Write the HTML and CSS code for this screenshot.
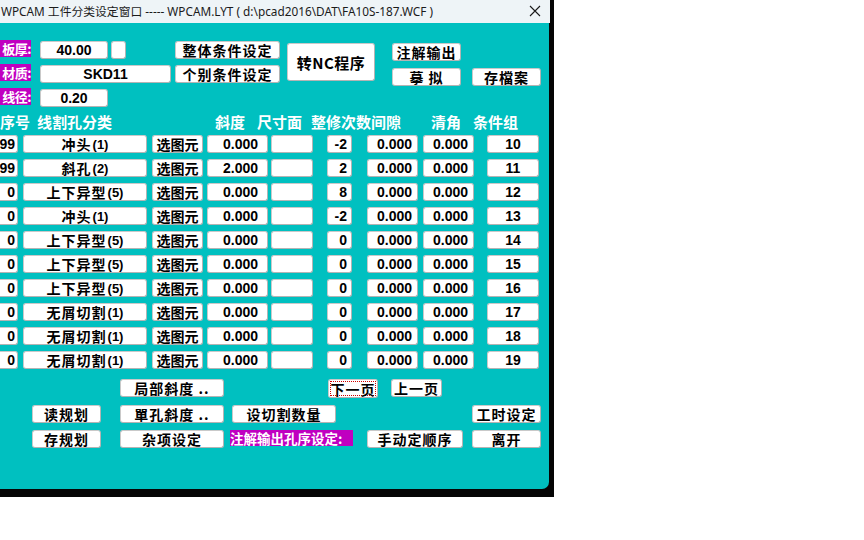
FILE: index.html
```html
<!DOCTYPE html>
<html lang="zh">
<head>
<meta charset="utf-8">
<title>WPCAM 工件分类设定窗口</title>
<link rel="stylesheet" href="styles.css">
</head>
<body>
<div class="window">
  <div class="titlebar">
    <span class="title">WPCAM 工件分类设定窗口 ----- WPCAM.LYT ( d:\pcad2016\DAT\FA10S-187.WCF )</span>
    <svg class="close" width="12" height="12" viewBox="0 0 12 12"><path d="M1 1 L11 11 M11 1 L1 11" stroke="#1a1a1a" stroke-width="1.1" fill="none"/></svg>
  </div>
  <div class="client">
    <div class="top">
      <div class="params">
        <div class="prow">
          <span class="tag">板厚:</span>
          <span class="fld num w68">40.00</span>
          <span class="fld box"></span>
          <span class="btn cond">整体条件设定</span>
        </div>
        <div class="prow">
          <span class="tag">材质:</span>
          <span class="fld num w131">SKD11</span>
          <span class="btn cond2">个别条件设定</span>
        </div>
        <div class="prow">
          <span class="tag">线径:</span>
          <span class="fld num w68">0.20</span>
        </div>
      </div>
      <div class="btn nc">转NC程序</div>
      <div class="actions">
        <div class="btn act">注解输出</div>
        <div class="arow">
          <div class="btn act">摹 拟</div>
          <div class="btn act save">存檔案</div>
        </div>
      </div>
    </div>

    <div class="thead">
      <span class="h-no">序号</span>
      <span class="h-cls">线割孔分类</span>
      <span class="h-slope">斜度</span>
      <span class="h-size">尺寸面</span>
      <span class="h-rep">整修次数间隙</span>
      <span class="h-corner">清角</span>
      <span class="h-grp">条件组</span>
    </div>

    <div class="table">
      <div class="trow"><span class="fld num c-no">99</span><span class="btn c-cls">冲头<span class="par">(1)</span></span><span class="btn c-pick">选图元</span><span class="fld num c-slope">0.000</span><span class="fld c-size"></span><span class="fld num c-rep">-2</span><span class="fld num c-gap">0.000</span><span class="fld num c-corner">0.000</span><span class="fld num c-grp">10</span></div>
      <div class="trow"><span class="fld num c-no">99</span><span class="btn c-cls">斜孔<span class="par">(2)</span></span><span class="btn c-pick">选图元</span><span class="fld num c-slope">2.000</span><span class="fld c-size"></span><span class="fld num c-rep">2</span><span class="fld num c-gap">0.000</span><span class="fld num c-corner">0.000</span><span class="fld num c-grp">11</span></div>
      <div class="trow"><span class="fld num c-no">0</span><span class="btn c-cls">上下异型<span class="par">(5)</span></span><span class="btn c-pick">选图元</span><span class="fld num c-slope">0.000</span><span class="fld c-size"></span><span class="fld num c-rep">8</span><span class="fld num c-gap">0.000</span><span class="fld num c-corner">0.000</span><span class="fld num c-grp">12</span></div>
      <div class="trow"><span class="fld num c-no">0</span><span class="btn c-cls">冲头<span class="par">(1)</span></span><span class="btn c-pick">选图元</span><span class="fld num c-slope">0.000</span><span class="fld c-size"></span><span class="fld num c-rep">-2</span><span class="fld num c-gap">0.000</span><span class="fld num c-corner">0.000</span><span class="fld num c-grp">13</span></div>
      <div class="trow"><span class="fld num c-no">0</span><span class="btn c-cls">上下异型<span class="par">(5)</span></span><span class="btn c-pick">选图元</span><span class="fld num c-slope">0.000</span><span class="fld c-size"></span><span class="fld num c-rep">0</span><span class="fld num c-gap">0.000</span><span class="fld num c-corner">0.000</span><span class="fld num c-grp">14</span></div>
      <div class="trow"><span class="fld num c-no">0</span><span class="btn c-cls">上下异型<span class="par">(5)</span></span><span class="btn c-pick">选图元</span><span class="fld num c-slope">0.000</span><span class="fld c-size"></span><span class="fld num c-rep">0</span><span class="fld num c-gap">0.000</span><span class="fld num c-corner">0.000</span><span class="fld num c-grp">15</span></div>
      <div class="trow"><span class="fld num c-no">0</span><span class="btn c-cls">上下异型<span class="par">(5)</span></span><span class="btn c-pick">选图元</span><span class="fld num c-slope">0.000</span><span class="fld c-size"></span><span class="fld num c-rep">0</span><span class="fld num c-gap">0.000</span><span class="fld num c-corner">0.000</span><span class="fld num c-grp">16</span></div>
      <div class="trow"><span class="fld num c-no">0</span><span class="btn c-cls">无屑切割<span class="par">(1)</span></span><span class="btn c-pick">选图元</span><span class="fld num c-slope">0.000</span><span class="fld c-size"></span><span class="fld num c-rep">0</span><span class="fld num c-gap">0.000</span><span class="fld num c-corner">0.000</span><span class="fld num c-grp">17</span></div>
      <div class="trow"><span class="fld num c-no">0</span><span class="btn c-cls">无屑切割<span class="par">(1)</span></span><span class="btn c-pick">选图元</span><span class="fld num c-slope">0.000</span><span class="fld c-size"></span><span class="fld num c-rep">0</span><span class="fld num c-gap">0.000</span><span class="fld num c-corner">0.000</span><span class="fld num c-grp">18</span></div>
      <div class="trow"><span class="fld num c-no">0</span><span class="btn c-cls">无屑切割<span class="par">(1)</span></span><span class="btn c-pick">选图元</span><span class="fld num c-slope">0.000</span><span class="fld c-size"></span><span class="fld num c-rep">0</span><span class="fld num c-gap">0.000</span><span class="fld num c-corner">0.000</span><span class="fld num c-grp">19</span></div>
    </div>

    <div class="bottom">
      <div class="brow r1">
        <span class="btn b-local">局部斜度 ..</span>
        <span class="btn b-next"><span class="focus">下一页</span></span>
        <span class="btn b-prev">上一页</span>
      </div>
      <div class="brow r2">
        <span class="btn b-read">读规划</span>
        <span class="btn b-mid">單孔斜度 ..</span>
        <span class="btn b-cnt">设切割数量</span>
        <span class="btn b-time">工时设定</span>
      </div>
      <div class="brow r3">
        <span class="btn b-read">存规划</span>
        <span class="btn b-mid">杂项设定</span>
        <span class="tag b-tag">注解输出孔序设定:</span>
        <span class="btn b-manual">手动定顺序</span>
        <span class="btn b-exit">离开</span>
      </div>
    </div>
  </div>
</div>
</body>
</html>
```

FILE: styles.css
```css
html, body {
  margin: 0;
  padding: 0;
  background: #ffffff;
}

.window {
  width: 554px;
  height: 497px;
  background: #050505;
  overflow: hidden;
  font-family: "Noto Sans CJK SC", "Liberation Sans", sans-serif;
}

.titlebar {
  width: 550px;
  height: 23px;
  background: #eef4f7;
  display: flex;
  align-items: center;
  justify-content: space-between;
  box-sizing: border-box;
  padding: 0 9px 0 1px;
}

.title {
  font-family: "Noto Sans", "Noto Sans CJK SC", sans-serif;
  font-size: 11.8px;
  color: #1b1b1b;
  white-space: nowrap;
  line-height: 23px;
}

.close {
  display: block;
  margin-top: -2px;
}

.client {
  width: 549px;
  height: 466px;
  background: #00c0c0;
  border-bottom-right-radius: 7px;
  box-sizing: border-box;
  padding-top: 18px;
}

/* generic controls */
.btn, .fld {
  box-sizing: border-box;
  height: 18px;
  background: #ffffff;
  border: 1px solid #c9c9c9;
  border-right-color: #b4b4b4;
  border-bottom-color: #b4b4b4;
  border-radius: 3px;
  color: #000;
  display: flex;
  align-items: center;
  justify-content: center;
  white-space: nowrap;
  flex: none;
}

.btn {
  font-family: "Noto Sans CJK SC", sans-serif;
  font-weight: 700;
  font-size: 14px;
  letter-spacing: 1px;
}

.num {
  font-family: "Liberation Sans", "Noto Sans CJK SC", sans-serif;
  font-weight: 700;
  font-size: 14px;
}

.tag {
  box-sizing: border-box;
  background: #c000c0;
  color: #ffffff;
  font-family: "Noto Sans CJK SC", sans-serif;
  font-weight: 700;
  font-size: 15px;
  height: 17px;
  line-height: 17px;
  white-space: nowrap;
  overflow: hidden;
  flex: none;
}

/* top area */
.top {
  display: flex;
  height: 66px;
}

.params {
  display: flex;
  flex-direction: column;
  gap: 6px;
  width: 280px;
}

.prow {
  display: flex;
  align-items: flex-start;
  height: 18px;
}

.prow .tag {
  width: 31px;
  font-size: 13px;
  letter-spacing: -0.5px;
  display: flex;
  justify-content: flex-end;
  margin-top: -1px;
}

.prow .fld {
  margin-left: 9px;
}

.w68 { width: 68px; }
.w131 { width: 131px; }
.prow .box { width: 15px; margin-left: 3px; }
.cond { width: 105px; margin-left: 49px; }
.cond2 { width: 105px; margin-left: 4px; }

.nc {
  width: 88px;
  height: 38px;
  margin-left: 7px;
  margin-top: 2px;
  font-size: 15px;
  letter-spacing: 0.5px;
}

.actions {
  margin-left: 17px;
  margin-top: 2px;
  display: flex;
  flex-direction: column;
}

.act { width: 69px; }

.arow {
  display: flex;
  margin-top: 7px;
}

.save { margin-left: 11px; }

/* header */
.thead {
  display: flex;
  height: 28px;
  align-items: center;
  color: #ffffff;
  font-weight: 700;
  font-size: 15px;
  white-space: nowrap;
}

.h-no { width: 37px; }
.h-cls { width: 178px; }
.h-slope { width: 42px; }
.h-size { width: 54px; }
.h-rep { width: 120px; }
.h-corner { width: 42px; }
.h-grp { width: 60px; }

/* table */
.table {
  display: flex;
  flex-direction: column;
  gap: 6px;
}

.trow {
  display: flex;
  height: 18px;
}

.c-no {
  width: 30px;
  margin-left: -12px;
  justify-content: flex-end;
  padding-right: 2px;
}
.c-cls { width: 124px; margin-left: 5px; }
.par {
  font-family: "Liberation Sans", sans-serif;
  font-size: 13px;
  letter-spacing: 0;
  margin-left: 1px;
}
.c-pick { width: 51px; margin-left: 5px; letter-spacing: 0; }
.c-slope { width: 61px; margin-left: 4px; justify-content: flex-end; padding-right: 9px; }
.c-size { width: 42px; margin-left: 3px; }
.c-rep { width: 25px; margin-left: 14px; justify-content: flex-end; padding-right: 4px; }
.c-gap { width: 51px; margin-left: 15px; justify-content: flex-end; padding-right: 5px; }
.c-corner { width: 51px; margin-left: 5px; justify-content: flex-end; padding-right: 5px; }
.c-grp { width: 52px; margin-left: 13px; }

/* bottom */
.bottom {
  margin-top: 10px;
  display: flex;
  flex-direction: column;
}

.brow {
  display: flex;
  height: 18px;
  align-items: flex-start;
}

.r2 { margin-top: 8px; }
.r3 { margin-top: 7px; }

.b-local { width: 104px; margin-left: 120px; }
.b-next { width: 50px; height: 19px; margin-left: 104px; padding: 1px; }
.focus {
  box-sizing: border-box;
  width: 100%;
  height: 100%;
  border: 1px dotted #d00000;
  display: flex;
  align-items: center;
  justify-content: center;
}
.b-prev { width: 51px; margin-left: 13px; }
.b-read { width: 69px; margin-left: 32px; }
.b-mid { width: 104px; margin-left: 19px; }
.b-cnt { width: 104px; margin-left: 8px; }
.b-time { width: 69px; margin-left: 136px; }
.b-tag {
  width: 123px;
  height: 16px;
  line-height: 16px;
  margin-left: 6px;
  font-size: 13.5px;
  letter-spacing: 0;
  overflow: visible;
}
.b-manual { width: 96px; margin-left: 14px; }
.b-exit { width: 69px; margin-left: 9px; }
```
